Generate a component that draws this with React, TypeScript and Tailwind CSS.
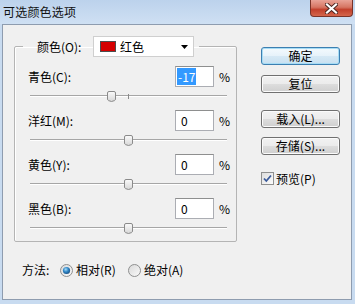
import type { ReactNode } from 'react';

type Row = { label: string; value: number; selected?: boolean };

const rows: Row[] = [
  { label: '青色(C):', value: -17, selected: true },
  { label: '洋红(M):', value: 0 },
  { label: '黄色(Y):', value: 0 },
  { label: '黑色(B):', value: 0 },
];

const TRACK = 197;

function Thumb({ value }: { value: number }) {
  const left = ((value + 100) / 200) * TRACK - 4.5;
  return (
    <svg
      className="absolute top-[1px]"
      style={{ left }}
      width="9"
      height="11"
      viewBox="0 0 9 11"
    >
      <defs>
        <linearGradient id="thumbFill" x1="0" y1="0" x2="0" y2="1">
          <stop offset="0" stopColor="#fbfbfb" />
          <stop offset="1" stopColor="#d6d6d6" />
        </linearGradient>
      </defs>
      <path
        d="M2 0.5 H7 Q8.5 0.5 8.5 2 V8 Q8.5 9 7.5 9.6 L4.5 10.5 L1.5 9.6 Q0.5 9 0.5 8 V2 Q0.5 0.5 2 0.5 Z"
        fill="url(#thumbFill)"
        stroke="#8a8a8a"
      />
    </svg>
  );
}

function SliderRow({ row }: { row: Row }) {
  return (
    <div className="h-[44px] last:h-[43px]">
      <div className="flex h-[21px] items-center">
        <div className="w-[160px] pl-[13px]">{row.label}</div>
        <div className="flex h-[21px] w-[39px] items-center border border-[#abadb3] border-t-[#8e8f8f] bg-white pl-[1px]">
          {row.selected ? (
            <span className="flex h-[17px] items-center bg-[#3399ff] px-[1px] text-white">
              {row.value}
            </span>
          ) : (
            <span className="pl-[4px]">{row.value}</span>
          )}
        </div>
        <span className="ml-[5px]">%</span>
      </div>
      <div className="relative ml-[15px] mt-[3px] h-[12px] w-[197px]">
        <div className="absolute left-0 right-0 top-[5px] h-px bg-[#a6a6a6]" />
        <div className="absolute left-0 right-0 top-[6px] h-px bg-white" />
        <div className="absolute left-[98px] top-[4px] h-[5px] w-px bg-[#8a8a8a]" />
        <Thumb value={row.value} />
      </div>
    </div>
  );
}

function Button({
  children,
  primary,
  className = '',
}: {
  children: ReactNode;
  primary?: boolean;
  className?: string;
}) {
  return (
    <button
      className={`flex h-[18px] w-[79px] items-center justify-center rounded-[3px] border leading-none ${
        primary
          ? 'border-[#3c7fb1] bg-[linear-gradient(to_bottom,#f4fafd_0%,#e6f2fa_50%,#d6e9f5_51%,#c8e0f1_100%)] shadow-[inset_0_0_0_1px_#a6dcf5]'
          : 'border-[#707070] bg-[linear-gradient(to_bottom,#f2f2f2_0%,#ebebeb_50%,#dddddd_51%,#cfcfcf_100%)] shadow-[inset_0_0_0_1px_#fbfbfb]'
      } ${className}`}
    >
      {children}
    </button>
  );
}

function Radio({ checked }: { checked?: boolean }) {
  return (
    <svg width="13" height="13" viewBox="0 0 13 13">
      <defs>
        <linearGradient id="radioBg" x1="0" y1="0" x2="1" y2="1">
          <stop offset="0" stopColor="#d8d8d8" />
          <stop offset="1" stopColor="#fbfbfb" />
        </linearGradient>
        <radialGradient id="radioDot" cx="0.4" cy="0.35" r="0.7">
          <stop offset="0" stopColor="#a8dcf8" />
          <stop offset="0.5" stopColor="#2f86c6" />
          <stop offset="1" stopColor="#174d80" />
        </radialGradient>
      </defs>
      <circle cx="6.5" cy="6.5" r="6" fill="url(#radioBg)" stroke="#8e8f8f" />
      {checked && <circle cx="6.5" cy="6.5" r="3.6" fill="url(#radioDot)" />}
    </svg>
  );
}

export default function App() {
  return (
    <div className="flex h-[304px] w-[355px] flex-col bg-[#c8dbf0] font-['Noto_Sans_CJK_SC','Noto_Sans',sans-serif] text-[12px] text-black">
      {/* title bar */}
      <div className="flex h-[24px] justify-between bg-[linear-gradient(to_bottom,#bcd2ec,#cfe0f3)]">
        <span className="pl-[3px] text-[12px] leading-[24px] tracking-[0.2px] text-[#111]">
          可选颜色选项
        </span>
        <div className="mr-[2px] flex h-[17px] w-[43px] items-center justify-center rounded-b-[4px] border border-t-0 border-[#7a3328] bg-[linear-gradient(to_bottom,#e9a397_0%,#d67563_45%,#c2402c_60%,#d4664c_100%)]">
          <svg width="13" height="11" viewBox="0 0 13 11">
            <path d="M2 1.5 L11 9.5 M11 1.5 L2 9.5" stroke="#4a2520" strokeWidth="4" strokeLinecap="square" />
            <path d="M2 1.5 L11 9.5 M11 1.5 L2 9.5" stroke="#ffffff" strokeWidth="2.2" strokeLinecap="square" />
          </svg>
        </div>
      </div>

      {/* client */}
      <div className="ml-[2px] flex h-[276px] w-[350px] border border-[#8e9caf] bg-[#f0f0f0]">
        <div className="w-[234px] pl-[11px] pt-[11px]">
          <fieldset className="w-[223px] rounded-[2px] border border-[#b4b4b4] pb-0 pt-[9px] shadow-[inset_1px_1px_0_#ffffff]">
            <legend className="ml-[8px] pl-[14px] pr-[5px]">
              <div className="flex h-[21px] items-center">
                <span className="w-[56px]">颜色(O):</span>
                <div className="flex h-[21px] w-[101px] items-center border border-[#cfcfcf] bg-white pl-[6px]">
                  <span className="h-[11px] w-[16px] border border-[#4d4d4d] bg-[#d40000]" />
                  <span className="ml-[4px] flex-1">红色</span>
                  <svg className="mr-[5px]" width="7" height="4" viewBox="0 0 7 4">
                    <path d="M0 0 H7 L3.5 4 Z" fill="#000" />
                  </svg>
                </div>
              </div>
            </legend>
            {rows.map((row) => (
              <SliderRow key={row.label} row={row} />
            ))}
          </fieldset>

          <div className="ml-[8px] mt-[18px] flex h-[20px] items-center">
            <span className="w-[38px]">方法:</span>
            <Radio checked />
            <span className="ml-[3px] w-[52px]">相对(R)</span>
            <Radio />
            <span className="ml-[3px]">绝对(A)</span>
          </div>
        </div>

        <div className="ml-[24px] flex flex-col pt-[22px]">
          <Button primary>确定</Button>
          <Button className="mt-[10px]">复位</Button>
          <Button className="mt-[17px]">载入(L)...</Button>
          <Button className="mt-[9px]">存储(S)...</Button>
          <div className="mt-[17px] flex h-[13px] items-center">
            <svg width="13" height="13" viewBox="0 0 13 13">
              <defs>
                <linearGradient id="chkBg" x1="0" y1="0" x2="1" y2="1">
                  <stop offset="0" stopColor="#dcdcdc" />
                  <stop offset="1" stopColor="#fdfdfd" />
                </linearGradient>
              </defs>
              <rect x="0.5" y="0.5" width="12" height="12" fill="url(#chkBg)" stroke="#8e8f8f" />
              <path d="M3 6.5 L5.3 9 L10 3.5" fill="none" stroke="#3a5a9a" strokeWidth="1.8" />
            </svg>
            <span className="ml-[2px]">预览(P)</span>
          </div>
        </div>
      </div>
    </div>
  );
}
